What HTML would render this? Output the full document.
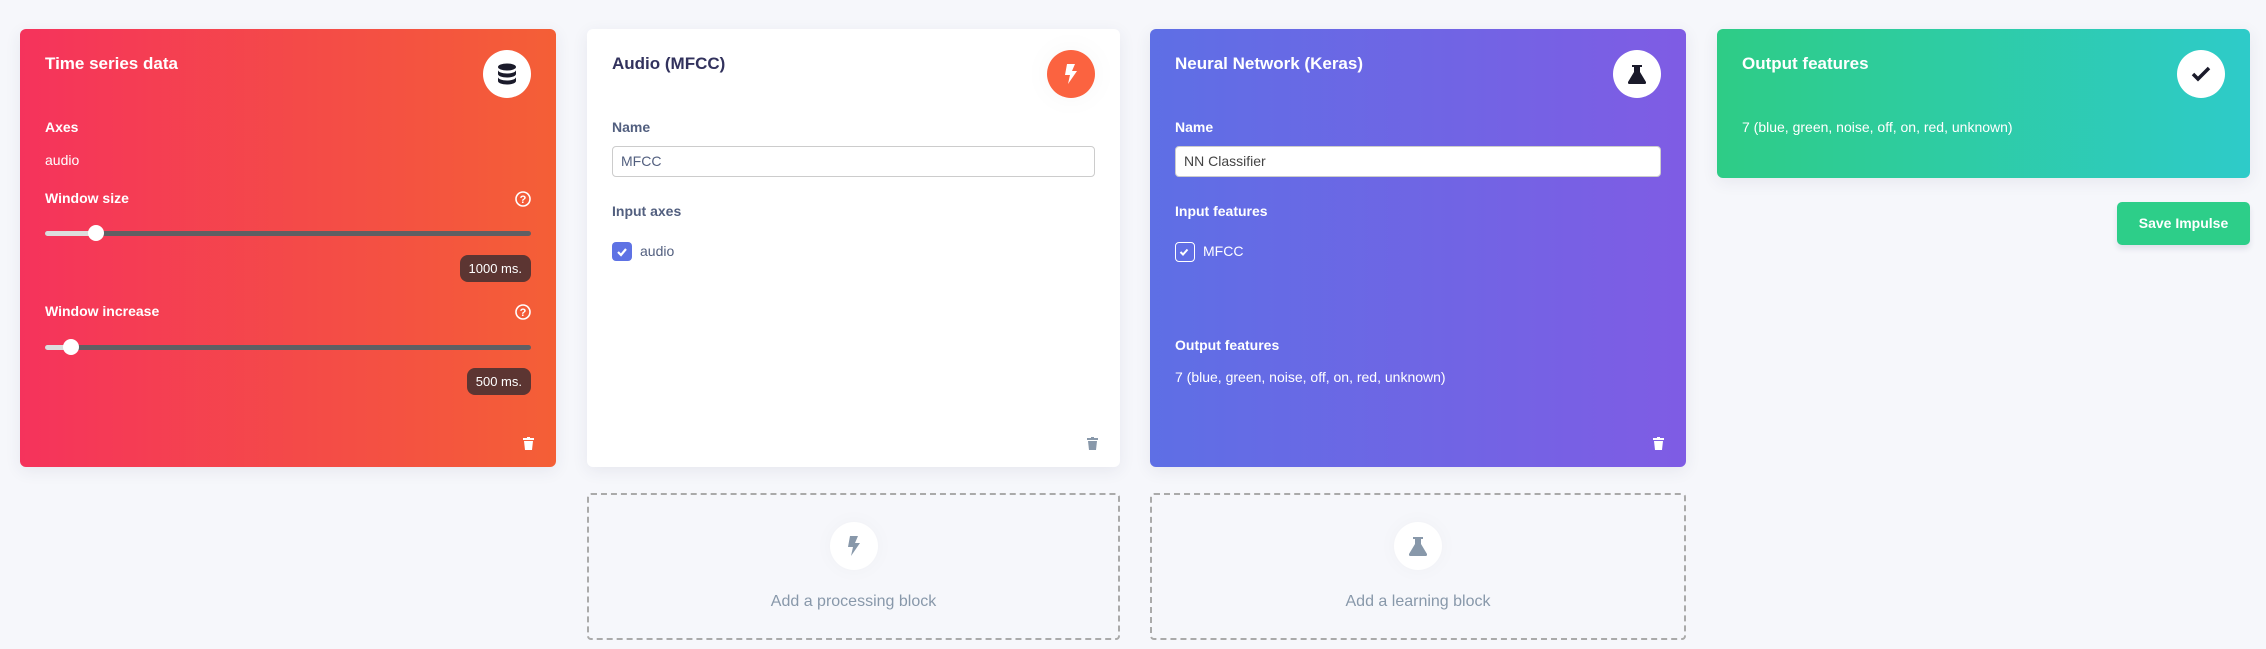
<!DOCTYPE html>
<html><head><meta charset="utf-8"><style>
*{box-sizing:border-box;margin:0;padding:0}
body{width:2266px;height:649px;background:#f6f7fb;font-family:"Liberation Sans",sans-serif;position:relative;overflow:hidden}
.card{position:absolute;top:29px;height:438px;border-radius:6px;box-shadow:0 4px 16px rgba(50,50,93,.08)}
.t{position:absolute;left:25px;top:25px;font-size:17px;font-weight:bold}
.l{position:absolute;left:25px;font-size:14px;font-weight:bold}
.v{position:absolute;left:25px;font-size:14px}
.ic{position:absolute;width:48px;height:48px;border-radius:50%;right:25px;top:21px;background:#fff;display:flex;align-items:center;justify-content:center}
.w{color:#fff}
.trk{position:absolute;left:25px;right:25px;height:5px;border-radius:3px;background:#5f5f63}
.fill{position:absolute;left:0;top:0;height:5px;background:#ddd;border-radius:3px}
.knob{position:absolute;top:-6px;width:16px;height:16px;border-radius:50%;background:#fff;margin-left:-8px}
.badge{position:absolute;right:25px;height:27px;border-radius:8px;background:#5c3532;color:#fff;font-size:13px;line-height:27px;padding:0 9px}
.inp{position:absolute;left:25px;right:25px;top:117px;height:31px;border:1px solid #ccc;border-radius:4px;background:#fff;font-size:14px;line-height:29px;padding-left:8px;color:#525f7f}
.dash{position:absolute;top:493px;height:147px;border:2px dashed #aaa;border-radius:4px}
.dash .c{position:absolute;left:50%;top:27px;margin-left:-24px;width:48px;height:48px;border-radius:50%;background:#fff;display:flex;align-items:center;justify-content:center;box-shadow:0 0 20px rgba(0,0,0,.03)}
.dash .x{position:absolute;left:0;right:0;top:98px;text-align:center;color:#8898aa;font-size:16px}
.trash{position:absolute;right:22px;bottom:17px}
</style></head><body>

<div class="card" style="left:20px;width:536px;background:linear-gradient(90deg,#f5335c,#f45f36)">
  <div class="t w">Time series data</div>
  <div class="ic"><svg width="20" height="22" viewBox="0 0 20 22"><ellipse cx="10" cy="4" rx="9" ry="3.5" fill="#1a1a2a"/><path d="M1 7c0 2 4 3.5 9 3.5s9-1.5 9-3.5v4c0 2-4 3.5-9 3.5S1 13 1 11z" fill="#1a1a2a"/><path d="M1 14c0 2 4 3.5 9 3.5s9-1.5 9-3.5v4c0 2-4 3.5-9 3.5S1 20 1 18z" fill="#1a1a2a"/></svg></div>
  <div class="l w" style="top:90px">Axes</div>
  <div class="v w" style="top:123px">audio</div>
  <div class="l w" style="top:161px">Window size</div>
  <svg style="position:absolute;right:25px;top:162px" width="16" height="16" viewBox="0 0 16 16"><circle cx="8" cy="8" r="7" fill="none" stroke="#fff" stroke-width="1.6"/><text x="8" y="12" font-size="11" font-weight="bold" fill="#fff" text-anchor="middle" font-family="Liberation Sans">?</text></svg>
  <div class="trk" style="top:202px"><div class="fill" style="width:51px"></div><div class="knob" style="left:51px"></div></div>
  <div class="badge" style="top:226px">1000 ms.</div>
  <div class="l w" style="top:274px">Window increase</div>
  <svg style="position:absolute;right:25px;top:275px" width="16" height="16" viewBox="0 0 16 16"><circle cx="8" cy="8" r="7" fill="none" stroke="#fff" stroke-width="1.6"/><text x="8" y="12" font-size="11" font-weight="bold" fill="#fff" text-anchor="middle" font-family="Liberation Sans">?</text></svg>
  <div class="trk" style="top:316px"><div class="fill" style="width:26px"></div><div class="knob" style="left:26px"></div></div>
  <div class="badge" style="top:339px">500 ms.</div>
  <svg class="trash" width="11" height="13" viewBox="0 0 11 13"><rect x="0" y="1" width="11" height="2" fill="#fff"/><rect x="4" y="0" width="3" height="2" fill="#fff"/><path d="M1 4h9l-1 9H2z" fill="#fff"/></svg>
</div>

<div class="card" style="left:587px;width:533px;background:#fff">
  <div class="t" style="color:#32325d">Audio (MFCC)</div>
  <div class="ic" style="background:#fb6340;box-shadow:0 0 30px rgba(0,0,0,.04)"><svg width="14" height="20" viewBox="0 0 14 20"><path d="M3 0h8l-3 7h5L4 20l2-9H1z" fill="#fff"/></svg></div>
  <div class="l" style="top:90px;color:#525f7f">Name</div>
  <div class="inp">MFCC</div>
  <div class="l" style="top:174px;color:#525f7f">Input axes</div>
  <div style="position:absolute;left:25px;top:213px;width:20px;height:19px;border-radius:4px;background:#5e72e4"><svg width="20" height="19" viewBox="0 0 20 19"><path d="M6 10l3 3 5-6" stroke="#fff" stroke-width="2.2" fill="none"/></svg></div>
  <div class="v" style="left:53px;top:214px;color:#525f7f">audio</div>
  <svg class="trash" width="11" height="13" viewBox="0 0 11 13"><rect x="0" y="1" width="11" height="2" fill="#8898aa"/><rect x="4" y="0" width="3" height="2" fill="#8898aa"/><path d="M1 4h9l-1 9H2z" fill="#8898aa"/></svg>
</div>

<div class="card" style="left:1150px;width:536px;background:linear-gradient(90deg,#5e6fe5,#7f5ce4)">
  <div class="t w">Neural Network (Keras)</div>
  <div class="ic"><svg width="18" height="20" viewBox="0 0 18 20"><path d="M4 1h10v2h-2v5l6 10c.5 1-.2 2-1.2 2H1.2C.2 20-.5 19 0 18l6-10V3H4z" fill="#1a1a2a"/></svg></div>
  <div class="l w" style="top:90px">Name</div>
  <div class="inp" style="color:#444">NN Classifier</div>
  <div class="l w" style="top:174px">Input features</div>
  <div style="position:absolute;left:25px;top:213px;width:20px;height:20px;border-radius:4px;border:1.5px solid #fff"><svg width="17" height="17" viewBox="0 0 17 17"><path d="M4.5 9l2.5 2.5 4.5-5" stroke="#fff" stroke-width="2" fill="none"/></svg></div>
  <div class="v w" style="left:53px;top:214px">MFCC</div>
  <div class="l w" style="top:308px">Output features</div>
  <div class="v w" style="top:340px">7 (blue, green, noise, off, on, red, unknown)</div>
  <svg class="trash" width="11" height="13" viewBox="0 0 11 13"><rect x="0" y="1" width="11" height="2" fill="#fff"/><rect x="4" y="0" width="3" height="2" fill="#fff"/><path d="M1 4h9l-1 9H2z" fill="#fff"/></svg>
</div>

<div class="card" style="left:1717px;width:533px;height:149px;background:linear-gradient(90deg,#2ecc86,#2ecbc9)">
  <div class="t w">Output features</div>
  <div class="ic"><svg width="20" height="16" viewBox="0 0 20 16"><path d="M2 8l5 5L18 2" stroke="#1a1a2a" stroke-width="3.5" fill="none"/></svg></div>
  <div class="v w" style="top:90px">7 (blue, green, noise, off, on, red, unknown)</div>
</div>

<div style="position:absolute;left:2117px;top:202px;width:133px;height:43px;border-radius:5px;background:#2dce89;color:#fff;font-size:14px;font-weight:bold;text-align:center;line-height:43px;box-shadow:0 4px 6px rgba(50,50,93,.11)">Save Impulse</div>

<div class="dash" style="left:587px;width:533px"><div class="c"><svg width="14" height="20" viewBox="0 0 14 20"><path d="M3 0h8l-3 7h5L4 20l2-9H1z" fill="#8898aa"/></svg></div><div class="x">Add a processing block</div></div>
<div class="dash" style="left:1150px;width:536px"><div class="c"><svg width="18" height="20" viewBox="0 0 18 20"><path d="M4 1h10v2h-2v5l6 10c.5 1-.2 2-1.2 2H1.2C.2 20-.5 19 0 18l6-10V3H4z" fill="#8898aa"/></svg></div><div class="x">Add a learning block</div></div>
</body></html>
